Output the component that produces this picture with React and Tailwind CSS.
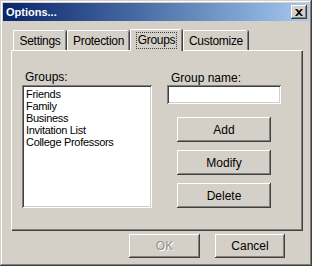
const raised =
  'bg-[#d4d0c8] shadow-[inset_-1px_-1px_#404040,inset_1px_1px_#ffffff,inset_-2px_-2px_#808080,inset_2px_2px_#d4d0c8]'
const sunken =
  'bg-white shadow-[inset_1px_1px_#808080,inset_-1px_-1px_#ffffff,inset_2px_2px_#404040,inset_-2px_-2px_#d4d0c8]'

const groups = ['Friends', 'Family', 'Business', 'Invitation List', 'College Professors']

function Tab({ label, active, className }) {
  if (active) {
    return (
      <div className={`relative z-10 -mb-[1px] flex h-[22px] items-center justify-center border-l border-t border-white bg-[#d4d0c8] shadow-[1px_0_#404040,inset_-1px_0_#808080] rounded-tl-[2px] rounded-tr-[2px] ${className}`}>
        <span className="border border-dotted border-[#404040] px-[1px] leading-[15px]">{label}</span>
      </div>
    )
  }
  return (
    <div className={`flex h-[20px] items-center justify-center border-l border-t border-white bg-[#d4d0c8] shadow-[1px_0_#404040,inset_-1px_0_#808080] rounded-tl-[2px] rounded-tr-[2px] ${className}`}>
      {label}
    </div>
  )
}

function Button({ label, disabled, className }) {
  return (
    <div className={`flex items-center justify-center ${raised} ${className}`}>
      {disabled ? (
        <span className="text-[#909090] [text-shadow:1px_1px_#ffffff]">{label}</span>
      ) : (
        <span className="text-black">{label}</span>
      )}
    </div>
  )
}

export default function App() {
  return (
    <div
      className="flex h-[266px] w-[312px] flex-col bg-[#d4d0c8] p-[3px] text-[12px] text-black shadow-[inset_-1px_-1px_#404040,inset_1px_1px_#d4d0c8,inset_-2px_-2px_#808080,inset_2px_2px_#ffffff]"
      style={{ fontFamily: '"Liberation Sans", Arial, sans-serif' }}
    >
      <div className="flex h-[18px] items-center justify-between bg-gradient-to-r from-[#0a246a] to-[#a6caf0] pl-[3px] pr-[2px]">
        <span className="text-[11px] font-bold text-white">Options...</span>
        <div className={`flex h-[14px] w-[16px] items-center justify-center ${raised}`}>
          <svg width="8" height="7" viewBox="0 0 8 7">
            <path d="M0 0h2l2 2 2-2h2L5 3.5 8 7H6L4 5 2 7H0l3-3.5z" fill="#000" />
          </svg>
        </div>
      </div>

      <div className="ml-[10px] mt-[7px] flex h-[22px] items-end tracking-[-0.3px]">
        <Tab label="Settings" className="w-[53px]" />
        <Tab label="Protection" className="ml-[1px] w-[62px]" />
        <Tab label="Groups" active className="ml-[1px] w-[52px]" />
        <Tab label="Customize" className="ml-[1px] w-[65px]" />
      </div>

      <div className="ml-[8px] flex h-[180px] w-[291px] border-l border-t border-white shadow-[1px_1px_#404040,inset_-1px_-1px_#808080]">
        <div className="ml-[10px] mt-[19px] flex flex-col">
          <span className="ml-[3px] leading-[14px]">Groups:</span>
          <div className={`mt-[1px] flex h-[123px] w-[130px] flex-col px-[4px] py-[3px] text-[11px] leading-[12px] tracking-[-0.3px] ${sunken}`}>
            {groups.map((g) => (
              <span key={g}>{g}</span>
            ))}
          </div>
        </div>
        <div className="ml-[15px] mt-[20px] flex flex-col">
          <span className="ml-[4px] leading-[14px]">Group name:</span>
          <div className={`h-[19px] w-[114px] ${sunken}`} />
          <div className="ml-[10px] mt-[13px] flex flex-col gap-[8px]">
            <Button label="Add" className="h-[25px] w-[94px]" />
            <Button label="Modify" className="h-[25px] w-[94px]" />
            <Button label="Delete" className="h-[25px] w-[94px]" />
          </div>
        </div>
      </div>

      <div className="ml-[126px] mt-[4px] flex gap-[15px]">
        <Button label="OK" disabled className="h-[24px] w-[71px]" />
        <Button label="Cancel" className="h-[24px] w-[70px]" />
      </div>
    </div>
  )
}
